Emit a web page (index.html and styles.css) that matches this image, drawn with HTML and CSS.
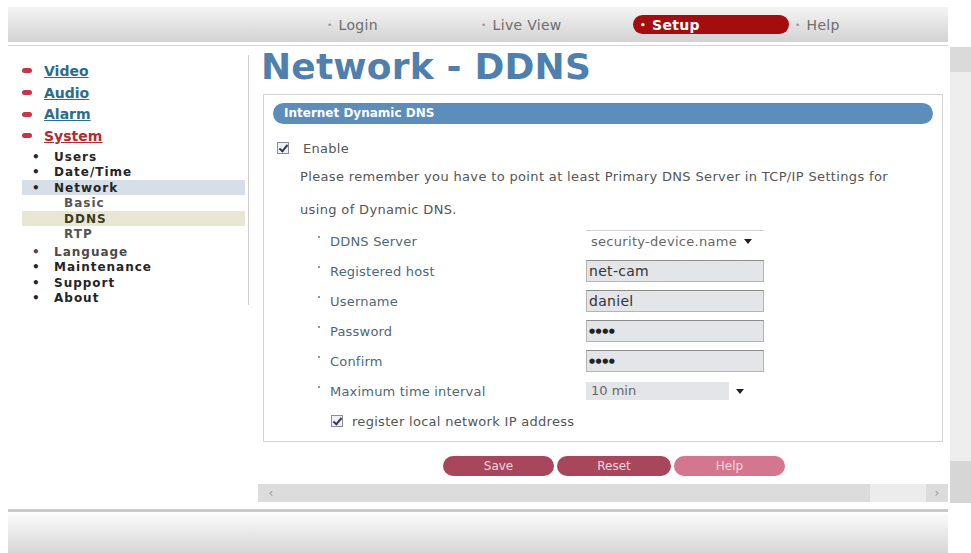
FILE: index.html
```html
<!DOCTYPE html>
<html lang="en">

<head>
    <meta charset="UTF-8">
    <meta name="viewport" content="width=device-width, initial-scale=1.0">
    <title>Network - DDNS</title>
    <link rel="stylesheet" href="styles.css">
</head>

<body>

    <div class="screen">
        <div class="page">
            <div class="topbar">
                <ul class="topnav">
                    <li class="topnav__item"><span class="dot">&bull;</span>Login</li>
                    <li class="topnav__item"><span class="dot">&bull;</span>Live View</li>
                    <li class="topnav__item topnav__item--active"><span class="dot">&bull;</span>Setup</li>
                    <li class="topnav__item"><span class="dot">&bull;</span>Help</li>
                </ul>
            </div>
            <div class="rule"></div>

            <div class="main">
                <div class="sidebar">
                    <ul class="menu">
                        <li class="menu__group"><span class="pill"></span><a href="#">Video</a></li>
                        <li class="menu__group"><span class="pill"></span><a href="#">Audio</a></li>
                        <li class="menu__group"><span class="pill"></span><a href="#">Alarm</a></li>
                        <li class="menu__group menu__group--open"><span class="pill"></span><a href="#">System</a></li>
                    </ul>
                    <ul class="submenu">
                        <li class="submenu__item"><span class="bullet">&bull;</span>Users</li>
                        <li class="submenu__item"><span class="bullet">&bull;</span>Date/Time</li>
                        <li class="submenu__item submenu__item--current"><span class="bullet">&bull;</span>Network</li>
                        <li class="submenu__leaf">Basic</li>
                        <li class="submenu__leaf submenu__leaf--current">DDNS</li>
                        <li class="submenu__leaf">RTP</li>
                        <li class="submenu__item submenu__item--grey"><span class="bullet">&bull;</span>Language</li>
                        <li class="submenu__item"><span class="bullet">&bull;</span>Maintenance</li>
                        <li class="submenu__item"><span class="bullet">&bull;</span>Support</li>
                        <li class="submenu__item"><span class="bullet">&bull;</span>About</li>
                    </ul>
                </div>

                <div class="content">
                    <h1 class="title">Network - DDNS</h1>

                    <div class="panel">
                        <div class="panel__head">Internet Dynamic DNS</div>

                        <label class="check check--enable">
                            <span class="box"></span>
                            <span>Enable</span>
                        </label>

                        <p class="note">Please remember you have to point at least Primary DNS Server in TCP/IP Settings for<br>using of Dynamic DNS.</p>

                        <div class="form">
                            <div class="form__row">
                                <span class="form__label">DDNS Server</span>
                                <div class="select select--plain">security-device.name<span class="arrow"></span></div>
                            </div>
                            <div class="form__row">
                                <span class="form__label">Registered host</span>
                                <div class="field">net-cam</div>
                            </div>
                            <div class="form__row">
                                <span class="form__label">Username</span>
                                <div class="field">daniel</div>
                            </div>
                            <div class="form__row">
                                <span class="form__label">Password</span>
                                <div class="field field--pass">&#9679;&#9679;&#9679;&#9679;</div>
                            </div>
                            <div class="form__row">
                                <span class="form__label">Confirm</span>
                                <div class="field field--pass">&#9679;&#9679;&#9679;&#9679;</div>
                            </div>
                            <div class="form__row">
                                <span class="form__label">Maximum time interval</span>
                                <div class="select select--short"><span class="select__value">10 min</span><span class="arrow"></span></div>
                            </div>
                        </div>

                        <label class="check check--local">
                            <span class="box"></span>
                            <span>register local network IP address</span>
                        </label>
                    </div>

                    <div class="buttons">
                        <button class="btn">Save</button>
                        <button class="btn btn--reset">Reset</button>
                        <button class="btn btn--help">Help</button>
                    </div>

                    <div class="hscroll">
                        <span class="hscroll__arrow">&lsaquo;</span>
                        <span class="hscroll__thumb"></span>
                        <span class="hscroll__arrow">&rsaquo;</span>
                    </div>
                </div>
            </div>

            <div class="bottom-rule"></div>
            <div class="bottom"></div>
        </div>

        <div class="vscroll">
            <div class="vscroll__top"></div>
            <div class="vscroll__track"></div>
            <div class="vscroll__end"></div>
        </div>
    </div>

</body>

</html>
```

FILE: styles.css
```css
* {
    margin: 0;
    padding: 0;
    box-sizing: border-box;
}

:root {
    --blue: #4f7fae;
    --red: #a8465c;
    --text: #555;
    --field: #e3e5e9;
}

body {
    font-family: "DejaVu Sans", Verdana, sans-serif;
    font-size: 13px;
    color: var(--text);
    background: #fff;
    overflow: hidden;
}

ul {
    list-style: none;
}

.screen {
    display: flex;
    height: 553px;
}

.page {
    width: 940px;
    margin-left: 8px;
    display: flex;
    flex-direction: column;
}

/* top navigation */

.topbar {
    margin-top: 7px;
    height: 35px;
    background: linear-gradient(#f4f4f4, #d2d2d2);
    display: flex;
    align-items: center;
}

.topnav {
    display: flex;
    padding-left: 317px;
    font-size: 14px;
    letter-spacing: 0.3px;
    color: #6d6d6d;
}

.topnav__item {
    width: 154px;
    height: 19px;
    display: flex;
    align-items: center;
}

.topnav__item .dot {
    font-size: 9px;
    color: #999;
    margin-right: 6px;
    margin-left: 2px;
}

.topnav__item--active {
    width: 156px;
    margin-right: 4px;
    background: #a40d10;
    border-radius: 10px;
    color: #fff;
    font-weight: bold;
    padding-left: 5px;
}

.topnav__item--active .dot {
    color: #fff;
}

.rule {
    margin-top: 2px;
    height: 2px;
    background: linear-gradient(#fff 0, #fff 50%, #d6d6d6 50%);
}

/* main area */

.main {
    display: flex;
    height: 456px;
}

.sidebar {
    width: 241px;
    margin-top: 9px;
    height: 250px;
    border-right: 1px solid #cfcfcf;
    padding-top: 5px;
}

.menu__group {
    height: 21.7px;
    display: flex;
    align-items: center;
    padding-left: 14px;
    font-size: 14px;
    font-weight: bold;
}

.menu__group a {
    color: #2c6c8c;
    text-decoration: underline;
}

.menu__group--open a {
    color: #b32a30;
}

.pill {
    width: 10px;
    height: 5px;
    border-radius: 3px;
    background: #c83448;
    margin-right: 12px;
}

.submenu {
    margin-top: 2px;
    padding-left: 14px;
    font-size: 12px;
    font-weight: bold;
    letter-spacing: 1px;
    color: #252525;
}

.submenu__item,
.submenu__leaf {
    height: 15.5px;
    display: flex;
    align-items: center;
    margin-right: 3px;
}

.submenu__item .bullet {
    width: 32px;
    padding-left: 10px;
}

.submenu__item--current {
    background: #d6dee7;
}

.submenu__item--grey {
    color: #4a4a4a;
    margin-top: 2px;
}

.submenu__leaf {
    padding-left: 42px;
    color: #555;
}

.submenu__leaf--current {
    background: #e9e6d4;
    color: #3b3a22;
}

.content {
    width: 690px;
    margin-left: 9px;
    display: flex;
    flex-direction: column;
}

.title {
    font-size: 36px;
    line-height: 42px;
    margin-left: 3px;
    margin-top: 0;
    color: var(--blue);
    letter-spacing: 0.2px;
}

.panel {
    margin-top: 6px;
    margin-left: 5px;
    width: 680px;
    height: 348px;
    border: 1px solid #d2d2d2;
    padding: 8px 9px 9px;
}

.panel__head {
    height: 21px;
    border-radius: 11px;
    background: #5d8dbb;
    color: #fff;
    font-weight: bold;
    font-size: 12px;
    line-height: 21px;
    padding-left: 11px;
}

.check {
    display: flex;
    align-items: center;
    height: 20px;
    letter-spacing: 0.3px;
}

.check--enable {
    margin-top: 14px;
    padding-left: 4px;
}

.check--local {
    margin-top: 5px;
    padding-left: 58px;
}

.box {
    width: 12px;
    height: 12px;
    border: 1px solid #8a8a9a;
    background: #eef0f4;
    margin-right: 14px;
    position: relative;
}

.check--local .box {
    margin-right: 9px;
}

.box::after {
    content: "";
    position: absolute;
    left: 3px;
    top: 0;
    width: 3px;
    height: 7px;
    border: solid #3a3a5a;
    border-width: 0 2px 2px 0;
    transform: rotate(40deg);
}

.note {
    margin-top: 2px;
    padding-left: 27px;
    line-height: 33px;
    letter-spacing: 0.35px;
}

.form__row {
    height: 30px;
    display: flex;
    align-items: center;
    padding-left: 45px;
}

.form__label {
    width: 268px;
    color: #4d6878;
    display: flex;
    align-items: center;
    letter-spacing: 0.2px;
}

.form__label::before {
    content: "";
    width: 2px;
    height: 2px;
    background: #999;
    margin-right: 10px;
    margin-top: -8px;
}

.field {
    width: 178px;
    height: 22px;
    background: var(--field);
    border: 1px solid #b4b4b4;
    border-top-color: #8c8c8c;
    font-size: 14px;
    color: #333;
    line-height: 20px;
    padding-left: 2px;
    letter-spacing: 0.3px;
}

.field--pass {
    font-size: 7px;
    letter-spacing: 0.5px;
    color: #222;
}

.select {
    height: 22px;
    display: flex;
    align-items: center;
    justify-content: space-between;
    color: #666;
}

.select--plain {
    width: 178px;
    border-top: 1px solid #d0d0d0;
    padding: 0 12px 0 5px;
    letter-spacing: 0.3px;
}

.select--short {
    width: 166px;
    padding-right: 8px;
}

.select__value {
    width: 143px;
    height: 18px;
    background: var(--field);
    padding-left: 5px;
    line-height: 18px;
}

.arrow {
    width: 0;
    height: 0;
    border-left: 4px solid transparent;
    border-right: 4px solid transparent;
    border-top: 5px solid #222;
}

/* buttons */

.buttons {
    display: flex;
    margin-top: 14px;
    padding-left: 185px;
    gap: 4px;
}

.btn {
    width: 111px;
    height: 20px;
    border: none;
    border-radius: 10px;
    background: var(--red);
    color: #f3d6dd;
    font-family: inherit;
    font-size: 12px;
}

.btn--reset {
    width: 114px;
    margin-left: -1px;
}

.btn--help {
    background: #d3768f;
    margin-left: -1px;
}

/* scrollbars */

.hscroll {
    margin-top: 8px;
    height: 18px;
    background: #dcdcdc;
    display: flex;
    align-items: center;
    color: #999;
    font-size: 12px;
}

.hscroll__arrow {
    width: 18px;
    text-align: center;
    margin-left: 4px;
}

.hscroll__thumb {
    margin-left: auto;
    width: 56px;
    height: 18px;
    background: #ececec;
}

.hscroll__arrow:last-child {
    margin-left: 2px;
    margin-right: 2px;
}

.bottom-rule {
    margin-top: 7px;
    height: 3px;
    background: #cacaca;
}

.bottom {
    margin-top: 2px;
    flex: 1;
    background: linear-gradient(#fafafa, #d6d6d6);
}

.vscroll {
    margin-left: 2px;
    margin-top: 47px;
    width: 21px;
    height: 456px;
    display: flex;
    flex-direction: column;
}

.vscroll__top {
    height: 25px;
    background: #dadada;
}

.vscroll__track {
    flex: 1;
    background: #eeeeee;
}

.vscroll__end {
    height: 42px;
    background: #d6d6d6;
}
```
